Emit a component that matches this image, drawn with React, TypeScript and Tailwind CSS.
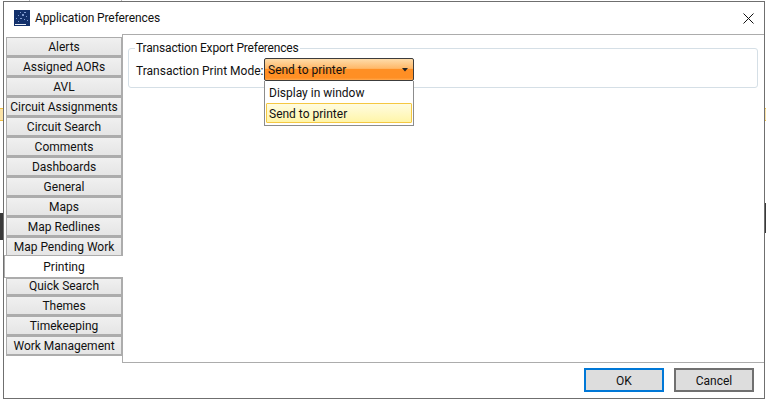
const tabs = [
  'Alerts',
  'Assigned AORs',
  'AVL',
  'Circuit Assignments',
  'Circuit Search',
  'Comments',
  'Dashboards',
  'General',
  'Maps',
  'Map Redlines',
  'Map Pending Work',
];
const tabsAfter = ['Quick Search', 'Themes', 'Timekeeping', 'Work Management'];

function AppIcon() {
  return (
    <svg width="16" height="16" viewBox="0 0 16 16" className="shrink-0">
      <rect width="16" height="16" fill="#12306b" />
      <g fill="#7f9bd0">
        <rect x="6" y="2" width="1" height="1" />
        <rect x="10" y="2" width="2" height="1" />
        <rect x="4" y="5" width="1" height="1" />
        <rect x="8" y="4" width="2" height="2" />
        <rect x="12" y="6" width="1" height="1" />
        <rect x="2" y="8" width="1" height="1" />
        <rect x="6" y="8" width="2" height="1" />
        <rect x="10" y="9" width="1" height="1" />
        <rect x="13" y="10" width="1" height="1" />
        <rect x="4" y="11" width="1" height="1" />
      </g>
      <rect x="1" y="14" width="11" height="1" fill="#e8eef8" />
    </svg>
  );
}

function Tab({ label, short }: { label: string; short?: boolean }) {
  return (
    <div
      className={`${short ? 'h-[18px] pb-px' : 'h-[20px] pt-px'} flex items-center justify-center border border-[#acacac] border-b-2 bg-gradient-to-b from-[#f0f0f0] to-[#e5e5e5] leading-none whitespace-nowrap`}
    >
      {label}
    </div>
  );
}

export default function App() {
  return (
    <div className="relative w-[766px] h-[403px] bg-white overflow-hidden text-[12px] text-[#111] font-['Roboto','Noto_Sans',sans-serif]">
      {/* bits of the app behind the dialog */}
      <div className="absolute left-0 top-[108px] w-[3px] h-[13px] bg-[#fbe3a8] border-y border-[#f0c040]" />
      <div className="absolute right-0 top-[108px] w-[2px] h-[13px] bg-[#fbe3a8] border-y border-[#f0c040]" />
      <div className="absolute left-0 top-[213px] w-[3px] h-[27px] bg-[#3a3a3a]" />
      <div className="absolute right-0 top-[203px] w-[2px] h-[30px] bg-[#3a3a3a]" />
      <div className="absolute left-[29px] top-0 w-px h-px bg-[#bbb]" />
      <div className="absolute left-[121px] top-0 w-px h-px bg-[#bbb]" />

      <div className="absolute left-[3px] top-[1px] w-[762px] h-[398px] flex flex-col bg-white border border-[#6f6f6f]">
        <div className="h-[32px] flex items-center pl-[10px] pr-[10px] gap-[5px] shrink-0">
          <AppIcon />
          <span className="flex-1 tracking-[-0.1px]">Application Preferences</span>
          <svg width="11" height="11" viewBox="0 0 11 11">
            <path d="M0.5 0.5L10.5 10.5M10.5 0.5L0.5 10.5" stroke="#111" strokeWidth="1" fill="none" />
          </svg>
        </div>

        <div className="h-[329px] flex shrink-0">
          <div className="w-[118px] pt-[2px] shrink-0 flex flex-col border-t border-transparent">
            <div className="pl-[2px]">
              {tabs.map((t) => (
                <Tab key={t} label={t} />
              ))}
            </div>
            <div className="h-[23px] -mt-[2px] pt-px flex items-center justify-center bg-white border-y border-l border-[#acacac] relative -mr-px z-10">
              Printing
            </div>
            <div className="pl-[2px]">
              {tabsAfter.map((t, i) => (
                <Tab key={t} label={t} short={i === 0} />
              ))}
            </div>
          </div>

          <div className="flex-1 border-l border-y border-[#acacac] relative pl-[5px] pr-[6px] pt-[7px]">
            <fieldset className="h-[47px] border border-[#d5dfe6] rounded-[3px] pl-[6px] -mt-[1px]">
              <legend className="px-[1px] leading-[14px] tracking-[-0.17px]">Transaction Export Preferences</legend>
              <div className="flex items-center pt-[7px] pl-[1px]">
                <span>Transaction Print Mode:</span>
              </div>
            </fieldset>

            <div className="absolute left-[141px] top-[23px] w-[150px] z-20">
              <div className="h-[23px] border border-[#3c3c3c] rounded-[2px] bg-[linear-gradient(#fedcaa_0%,#ffb868_45%,#ff8f24_47%,#ff8f24_90%,#ffa94f_100%)] flex items-center pl-[3px] pr-[5px]">
                <span className="flex-1">Send to printer</span>
                <svg width="6" height="4" viewBox="0 0 6 4">
                  <path d="M0 0H6L3 3.5Z" fill="#222" />
                </svg>
              </div>
              <div className="h-[45px] border border-[#8c8c8c] border-t-0 bg-white p-px">
                <div className="h-[21px] flex items-center pl-[3px] pt-px">Display in window</div>
                <div className="h-[20px] flex items-center pl-[2px] pt-[2px] border border-[#f5c842] rounded-[1px] bg-gradient-to-b from-[#fffce0] to-[#fff5a8]">
                  Send to printer
                </div>
              </div>
            </div>
          </div>
        </div>

        <div className="flex-1 flex items-start justify-end gap-[10px] pt-[5px] pr-[10px]">
          <button className="w-[80px] h-[24px] pt-[2px] bg-[#dddddd] border-2 border-[#0078d7]">OK</button>
          <button className="w-[80px] h-[24px] pt-[2px] bg-[#dddddd] border-2 border-[#707070]">Cancel</button>
        </div>
      </div>
    </div>
  );
}
